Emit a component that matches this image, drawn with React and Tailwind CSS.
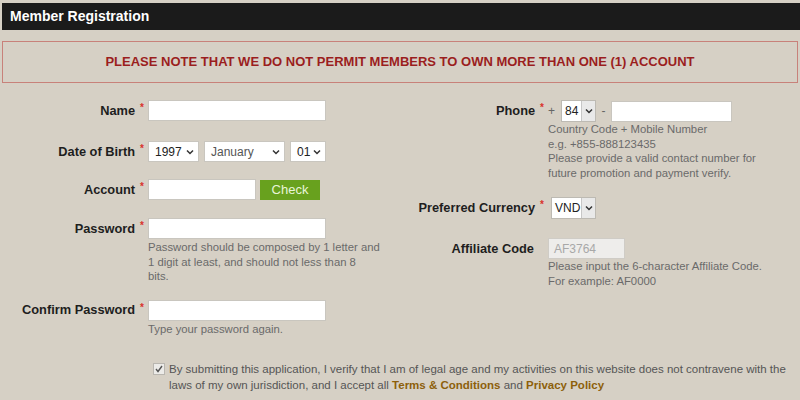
import React from 'react';

function Star() {
  return <span className="text-[#d9322b] text-[10px] ml-[5px] relative -top-[3px]">*</span>;
}

function Chevron() {
  return (
    <svg width="8" height="6" viewBox="0 0 8 6" className="shrink-0">
      <path d="M1 1.5 L4 4.5 L7 1.5" fill="none" stroke="#333" strokeWidth="1.5" />
    </svg>
  );
}

function FakeSelect({ value, width, muted }) {
  return (
    <div className={`${width} h-[21px] bg-white border border-[#c9c6bf] flex items-center justify-between pl-[6px] pr-[4px] text-[12px] ${muted ? 'text-[#555]' : 'text-[#222]'}`}>
      <span>{value}</span>
      <Chevron />
    </div>
  );
}

function BoxSelect({ value, width }) {
  return (
    <div className={`${width} h-[22px] bg-white border border-[#bdbab3] flex items-stretch text-[12px] text-[#222]`}>
      <span className="flex-1 flex items-center pl-[3px]">{value}</span>
      <span className="w-[14px] bg-[#e9e9e9] border-l border-[#c7c7c7] flex items-center justify-center">
        <Chevron />
      </span>
    </div>
  );
}

function Input({ width }) {
  return <div className={`${width} h-[21px] bg-white border border-[#c9c6bf]`} />;
}

function Row({ label, star = true, children, className = '' }) {
  return (
    <div className={`flex items-start ${className}`}>
      <div className="w-[144px] h-[21px] flex items-center justify-end text-[12.8px] font-bold text-[#1e1e1e]">
        {label}
        {star ? <Star /> : <span className="w-[10px]" />}
      </div>
      <div className="ml-[4px]">{children}</div>
    </div>
  );
}

function Help({ children, className = '' }) {
  return <div className={`text-[11.3px] leading-[14.5px] text-[#6a6a6a] ${className}`}>{children}</div>;
}

export default function App() {
  return (
    <div className="w-[800px] h-[400px] bg-[#d6d0c5] overflow-hidden pt-[3px] pl-[2px]" style={{ fontFamily: '"Liberation Sans", Arial, sans-serif' }}>
      <div className="h-[27px] bg-[#1b1b1b] flex items-center pl-[8px] text-white text-[14px] font-bold">
        Member Registration
      </div>

      <div className="mt-[11px] mr-[2px] h-[42px] border border-[#c8817a] flex items-center justify-center text-[13px] font-bold text-[#9b1e1e]">
        PLEASE NOTE THAT WE DO NOT PERMIT MEMBERS TO OWN MORE THAN ONE (1) ACCOUNT
      </div>

      <div className="flex mt-[17px] -ml-[2px]">
        {/* left column */}
        <div className="w-[400px]">
          <Row label="Name" className="mb-[20px]">
            <Input width="w-[178px]" />
          </Row>
          <Row label="Date of Birth" className="mb-[17px]">
            <div className="flex gap-[5px]">
              <FakeSelect value="1997" width="w-[51px]" />
              <FakeSelect value="January" width="w-[81px]" muted />
              <FakeSelect value="01" width="w-[36px]" />
            </div>
          </Row>
          <Row label="Account" className="mb-[18px]">
            <div className="flex gap-[4px]">
              <Input width="w-[108px]" />
              <div className="w-[60px] h-[20px] mt-[1px] bg-[#68a11e] text-[#e9f5d9] text-[13px] flex items-center justify-center">
                Check
              </div>
            </div>
          </Row>
          <Row label="Password" className="mb-[16px]">
            <Input width="w-[178px]" />
            <Help className="mt-[1px]">
              Password should be composed by 1 letter and
              <br />
              1 digit at least, and should not less than 8
              <br />
              bits.
            </Help>
          </Row>
          <Row label="Confirm Password">
            <Input width="w-[178px]" />
            <Help className="mt-[1px]">Type your password again.</Help>
          </Row>
        </div>

        {/* right column */}
        <div className="w-[400px]">
          <Row label="Phone" className="mb-[17px]">
            <div className="flex items-center text-[12px] text-[#666]">
              <span className="w-[13px]">+</span>
              <BoxSelect value="84" width="w-[35px]" />
              <span className="w-[15px] text-center">-</span>
              <Input width="w-[121px]" />
            </div>
            <Help>
              Country Code + Mobile Number
              <br />
              e.g. +855-888123435
              <br />
              Please provide a valid contact number for
              <br />
              future promotion and payment verify.
            </Help>
          </Row>
          <Row label="Preferred Currency" className="mb-[19px]">
            <div className="ml-[3px]">
              <BoxSelect value="VND" width="w-[45px]" />
            </div>
          </Row>
          <Row label="Affiliate Code" star={false}>
            <div className="w-[77px] h-[21px] bg-[#eeedeb] border border-[#cfccc6] text-[12px] text-[#a8a8a8] flex items-center pl-[5px]">
              AF3764
            </div>
            <Help>
              Please input the 6-character Affiliate Code.
              <br />
              For example: AF0000
            </Help>
          </Row>
        </div>
      </div>

      <div className="flex items-start mt-[26px] ml-[151px] pr-[10px]">
        <svg width="12" height="12" viewBox="0 0 12 12" className="mt-[1px] shrink-0">
          <rect x="0.5" y="0.5" width="11" height="11" fill="#ecebe8" stroke="#b9b6b0" />
          <path d="M3 6 L5 8.5 L9 3" fill="none" stroke="#555" strokeWidth="1.4" />
        </svg>
        <div className="ml-[4px] text-[11.5px] leading-[15.5px] text-[#555] whitespace-nowrap">
          <div>By submitting this application, I verify that I am of legal age and my activities on this website does not contravene with the</div>
          <div>
            <span>laws of my own jurisdiction, and I accept all </span>
            <span className="font-bold text-[#8d5f0b]">Terms &amp; Conditions</span>
            <span> and </span>
            <span className="font-bold text-[#8d5f0b]">Privacy Policy</span>
          </div>
        </div>
      </div>
    </div>
  );
}
